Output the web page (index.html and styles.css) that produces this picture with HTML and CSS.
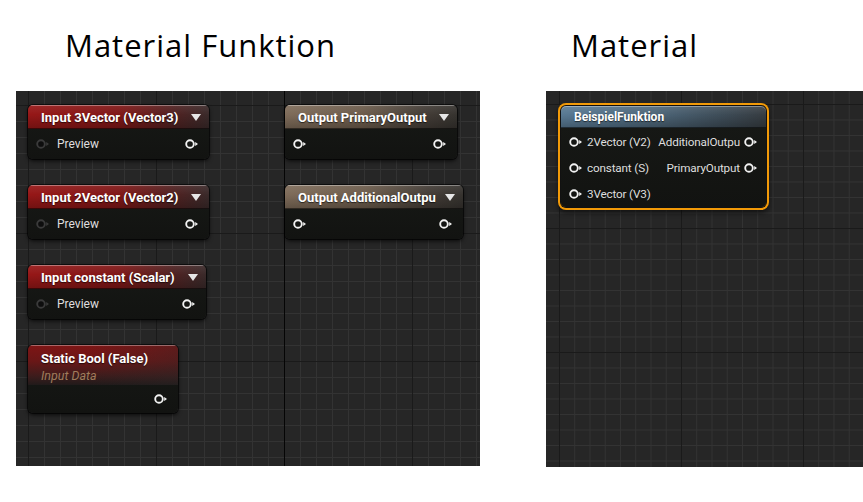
FILE: index.html
```html
<!DOCTYPE html>
<html lang="de">
<head>
<meta charset="utf-8">
<title>Material Funktion</title>
<link rel="stylesheet" href="styles.css">
</head>
<body>
<div class="page">
  <section class="col col-left">
    <h1 class="title">Material Funktion</h1>
    <div class="canvas canvas-left">

      <div class="node node-input n1">
        <div class="head"><span class="name">Input 3Vector (Vector3)</span><svg class="caret" viewBox="0 0 10 7"><polygon points="0,0 10,0 5,7"/></svg></div>
        <div class="row">
          <svg class="pin pin-off" viewBox="0 0 14 10"><circle cx="5" cy="5" r="3.8"/><polygon points="10.2,3 13,5 10.2,7"/></svg>
          <span class="label">Preview</span>
          <svg class="pin pin-on push" viewBox="0 0 14 10"><circle cx="5" cy="5" r="3.8"/><polygon points="10.2,3 13,5 10.2,7"/></svg>
        </div>
      </div>

      <div class="node node-input n2">
        <div class="head"><span class="name">Input 2Vector (Vector2)</span><svg class="caret" viewBox="0 0 10 7"><polygon points="0,0 10,0 5,7"/></svg></div>
        <div class="row">
          <svg class="pin pin-off" viewBox="0 0 14 10"><circle cx="5" cy="5" r="3.8"/><polygon points="10.2,3 13,5 10.2,7"/></svg>
          <span class="label">Preview</span>
          <svg class="pin pin-on push" viewBox="0 0 14 10"><circle cx="5" cy="5" r="3.8"/><polygon points="10.2,3 13,5 10.2,7"/></svg>
        </div>
      </div>

      <div class="node node-input n3">
        <div class="head"><span class="name">Input constant (Scalar)</span><svg class="caret" viewBox="0 0 10 7"><polygon points="0,0 10,0 5,7"/></svg></div>
        <div class="row">
          <svg class="pin pin-off" viewBox="0 0 14 10"><circle cx="5" cy="5" r="3.8"/><polygon points="10.2,3 13,5 10.2,7"/></svg>
          <span class="label">Preview</span>
          <svg class="pin pin-on push" viewBox="0 0 14 10"><circle cx="5" cy="5" r="3.8"/><polygon points="10.2,3 13,5 10.2,7"/></svg>
        </div>
      </div>

      <div class="node node-static n4">
        <div class="head head-tall">
          <span class="name">Static Bool (False)</span>
          <span class="sub">Input Data</span>
        </div>
        <div class="row row-static">
          <svg class="pin pin-on push" viewBox="0 0 14 10"><circle cx="5" cy="5" r="3.8"/><polygon points="10.2,3 13,5 10.2,7"/></svg>
        </div>
      </div>

      <div class="node node-output o1">
        <div class="head"><span class="name">Output PrimaryOutput</span><svg class="caret" viewBox="0 0 10 7"><polygon points="0,0 10,0 5,7"/></svg></div>
        <div class="row">
          <svg class="pin pin-on" viewBox="0 0 14 10"><circle cx="5" cy="5" r="3.8"/><polygon points="10.2,3 13,5 10.2,7"/></svg>
          <svg class="pin pin-on push" viewBox="0 0 14 10"><circle cx="5" cy="5" r="3.8"/><polygon points="10.2,3 13,5 10.2,7"/></svg>
        </div>
      </div>

      <div class="node node-output o2">
        <div class="head"><span class="name">Output AdditionalOutpu</span><svg class="caret" viewBox="0 0 10 7"><polygon points="0,0 10,0 5,7"/></svg></div>
        <div class="row">
          <svg class="pin pin-on" viewBox="0 0 14 10"><circle cx="5" cy="5" r="3.8"/><polygon points="10.2,3 13,5 10.2,7"/></svg>
          <svg class="pin pin-on push" viewBox="0 0 14 10"><circle cx="5" cy="5" r="3.8"/><polygon points="10.2,3 13,5 10.2,7"/></svg>
        </div>
      </div>

    </div>
  </section>

  <section class="col col-right">
    <h1 class="title title-right">Material</h1>
    <div class="canvas canvas-right">
      <div class="node node-func f1">
        <div class="head head-func"><span class="name">BeispielFunktion</span></div>
        <div class="func-body">
          <div class="frow">
            <span class="side"><svg class="pin pin-on" viewBox="0 0 14 10"><circle cx="5" cy="5" r="3.8"/><polygon points="10.2,3 13,5 10.2,7"/></svg><span class="label">2Vector (V2)</span></span>
            <span class="side"><span class="label">AdditionalOutpu</span><svg class="pin pin-on" viewBox="0 0 14 10"><circle cx="5" cy="5" r="3.8"/><polygon points="10.2,3 13,5 10.2,7"/></svg></span>
          </div>
          <div class="frow">
            <span class="side"><svg class="pin pin-on" viewBox="0 0 14 10"><circle cx="5" cy="5" r="3.8"/><polygon points="10.2,3 13,5 10.2,7"/></svg><span class="label">constant (S)</span></span>
            <span class="side"><span class="label">PrimaryOutput</span><svg class="pin pin-on" viewBox="0 0 14 10"><circle cx="5" cy="5" r="3.8"/><polygon points="10.2,3 13,5 10.2,7"/></svg></span>
          </div>
          <div class="frow">
            <span class="side"><svg class="pin pin-on" viewBox="0 0 14 10"><circle cx="5" cy="5" r="3.8"/><polygon points="10.2,3 13,5 10.2,7"/></svg><span class="label">3Vector (V3)</span></span>
          </div>
        </div>
      </div>
    </div>
  </section>
</div>
</body>
</html>
```

FILE: styles.css
```css
html, body {
  margin: 0;
  padding: 0;
  background: #ffffff;
}

.page {
  display: flex;
  gap: 66px;
  padding-left: 16px;
}

.col {
  display: flex;
  flex-direction: column;
}

.col-left { width: 464px; }
.col-right { width: 317px; }

.title {
  margin: 0;
  height: 91px;
  box-sizing: border-box;
  padding-top: 25px;
  padding-left: 49px;
  font-family: "Open Sans", "Liberation Sans", sans-serif;
  font-weight: normal;
  font-size: 31px;
  letter-spacing: 1px;
  line-height: 40px;
  color: #000;
}

.title-right { padding-left: 25px; }

.canvas {
  position: relative;
  background-color: #262626;
}

.canvas-left {
  height: 375px;
  background-image:
    linear-gradient(#050505, #050505),
    linear-gradient(90deg, #1a1a1a 1px, transparent 1px),
    linear-gradient(#1a1a1a 1px, transparent 1px),
    linear-gradient(90deg, #333333 1px, transparent 1px),
    linear-gradient(#333333 1px, transparent 1px);
  background-size: 1px 100%, 128px 128px, 128px 128px, 16px 16px, 16px 16px;
  background-position: 268px 0, 12px 0, 0 14px, 12px 0, 0 14px;
  background-repeat: no-repeat, repeat, repeat, repeat, repeat;
}

.canvas-right {
  height: 376px;
  background-image:
    linear-gradient(90deg, #1a1a1a 1px, transparent 1px),
    linear-gradient(#1a1a1a 1px, transparent 1px),
    linear-gradient(90deg, #333333 1px, transparent 1px),
    linear-gradient(#333333 1px, transparent 1px);
  background-size: 122px 124px, 122px 124px, 15.25px 15.5px, 15.25px 15.5px;
  background-position: 13px 13px, 13px 13px, 13px 13px, 13px 13px;
}

/* Nodes */
.node {
  position: absolute;
  box-sizing: border-box;
  border-radius: 5px;
  background: linear-gradient(180deg, #171916 0%, #121311 100%);
  box-shadow: 0 2px 4px rgba(0, 0, 0, 0.75), 0 0 0 1px rgba(0, 0, 0, 0.6);
  font-family: Roboto, "Liberation Sans", sans-serif;
  color: #fff;
  overflow: hidden;
}

.head {
  height: 24px;
  display: flex;
  align-items: center;
  padding: 0 8px 0 13px;
  font-weight: bold;
  font-size: 13px;
  box-shadow: inset 0 1px 0 rgba(255, 255, 255, 0.35), inset 0 -1px 0 rgba(0, 0, 0, 0.5);
  text-shadow: 0 1px 1px rgba(0, 0, 0, 0.6);
}

.name { white-space: nowrap; }

.caret {
  width: 10px;
  height: 7px;
  margin-left: auto;
  flex: none;
  fill: #e6e6e6;
}

.node-input .head {
  background:
    linear-gradient(180deg, rgba(255, 255, 255, 0.08) 0%, rgba(0, 0, 0, 0) 40%, rgba(0, 0, 0, 0.25) 100%),
    linear-gradient(90deg, #961717 0%, #801717 50%, #4e2222 82%, #3a2a2a 100%);
}

.node-output .head {
  background:
    linear-gradient(180deg, rgba(255, 255, 255, 0.08) 0%, rgba(0, 0, 0, 0) 40%, rgba(0, 0, 0, 0.25) 100%),
    linear-gradient(90deg, #7f6c5a 0%, #6c5c4c 45%, #443d37 80%, #36332f 100%);
}

.node-static .head-tall {
  height: 40px;
  flex-direction: column;
  align-items: flex-start;
  justify-content: flex-start;
  padding-top: 6px;
  box-sizing: border-box;
  background:
    linear-gradient(90deg, rgba(0, 0, 0, 0) 40%, rgba(40, 40, 40, 0.35) 100%),
    linear-gradient(180deg, #7e1515 0%, #6a1717 40%, #3a1c1c 80%, #201a1a 100%);
  box-shadow: inset 0 1px 0 rgba(255, 255, 255, 0.35);
}

.sub {
  margin-top: 2px;
  font-weight: normal;
  font-style: italic;
  font-size: 12.5px;
  color: #a07c5c;
  text-shadow: none;
}

.row {
  height: 30px;
  display: flex;
  align-items: center;
  padding: 0 10px 0 8px;
  font-size: 12px;
}

.row-static { height: 28px; }

.label {
  color: #dedede;
  white-space: nowrap;
}

.pin {
  width: 14px;
  height: 10px;
  flex: none;
}

.pin circle {
  fill: none;
  stroke-width: 1.9;
}

.pin-on circle { stroke: #f2f2f2; }
.pin-on polygon { fill: #f2f2f2; }
.pin-off circle { stroke: #3b3b3b; fill: #0d0d0d; }
.pin-off polygon { fill: #3b3b3b; }

.pin-off + .label { margin-left: 7px; }

.push { margin-left: auto; }

/* node positions on the canvas */
.n1 { left: 12px; top: 14px; width: 181px; height: 54px; }
.n2 { left: 12px; top: 94px; width: 181px; height: 54px; }
.n3 { left: 12px; top: 174px; width: 178px; height: 54px; }
.n4 { left: 12px; top: 254px; width: 150px; height: 68px; }
.o1 { left: 269px; top: 14px; width: 172px; height: 54px; }
.o2 { left: 269px; top: 94px; width: 178px; height: 54px; }

/* material function node */
.node-func {
  border-radius: 5px;
  box-shadow: 0 0 0 1px #111, 0 0 0 3px #f29a08, 0 3px 5px 3px rgba(0, 0, 0, 0.5);
  overflow: visible;
}

.f1 { left: 15px; top: 15px; width: 205px; height: 101px; }

.head-func {
  height: 22px;
  font-size: 12px;
  border-radius: 5px 5px 0 0;
  background:
    linear-gradient(180deg, rgba(255, 255, 255, 0.1) 0%, rgba(0, 0, 0, 0) 40%, rgba(0, 0, 0, 0.25) 100%),
    linear-gradient(90deg, #587993 0%, #4d6679 45%, #3d4b56 80%, #363c41 100%);
}

.func-body {
  padding: 1px 8px 0 8px;
  font-size: 11.7px;
  letter-spacing: -0.15px;
}

.frow {
  height: 26px;
  display: flex;
  align-items: center;
  justify-content: space-between;
}

.side {
  display: flex;
  align-items: center;
  gap: 4px;
}
```
